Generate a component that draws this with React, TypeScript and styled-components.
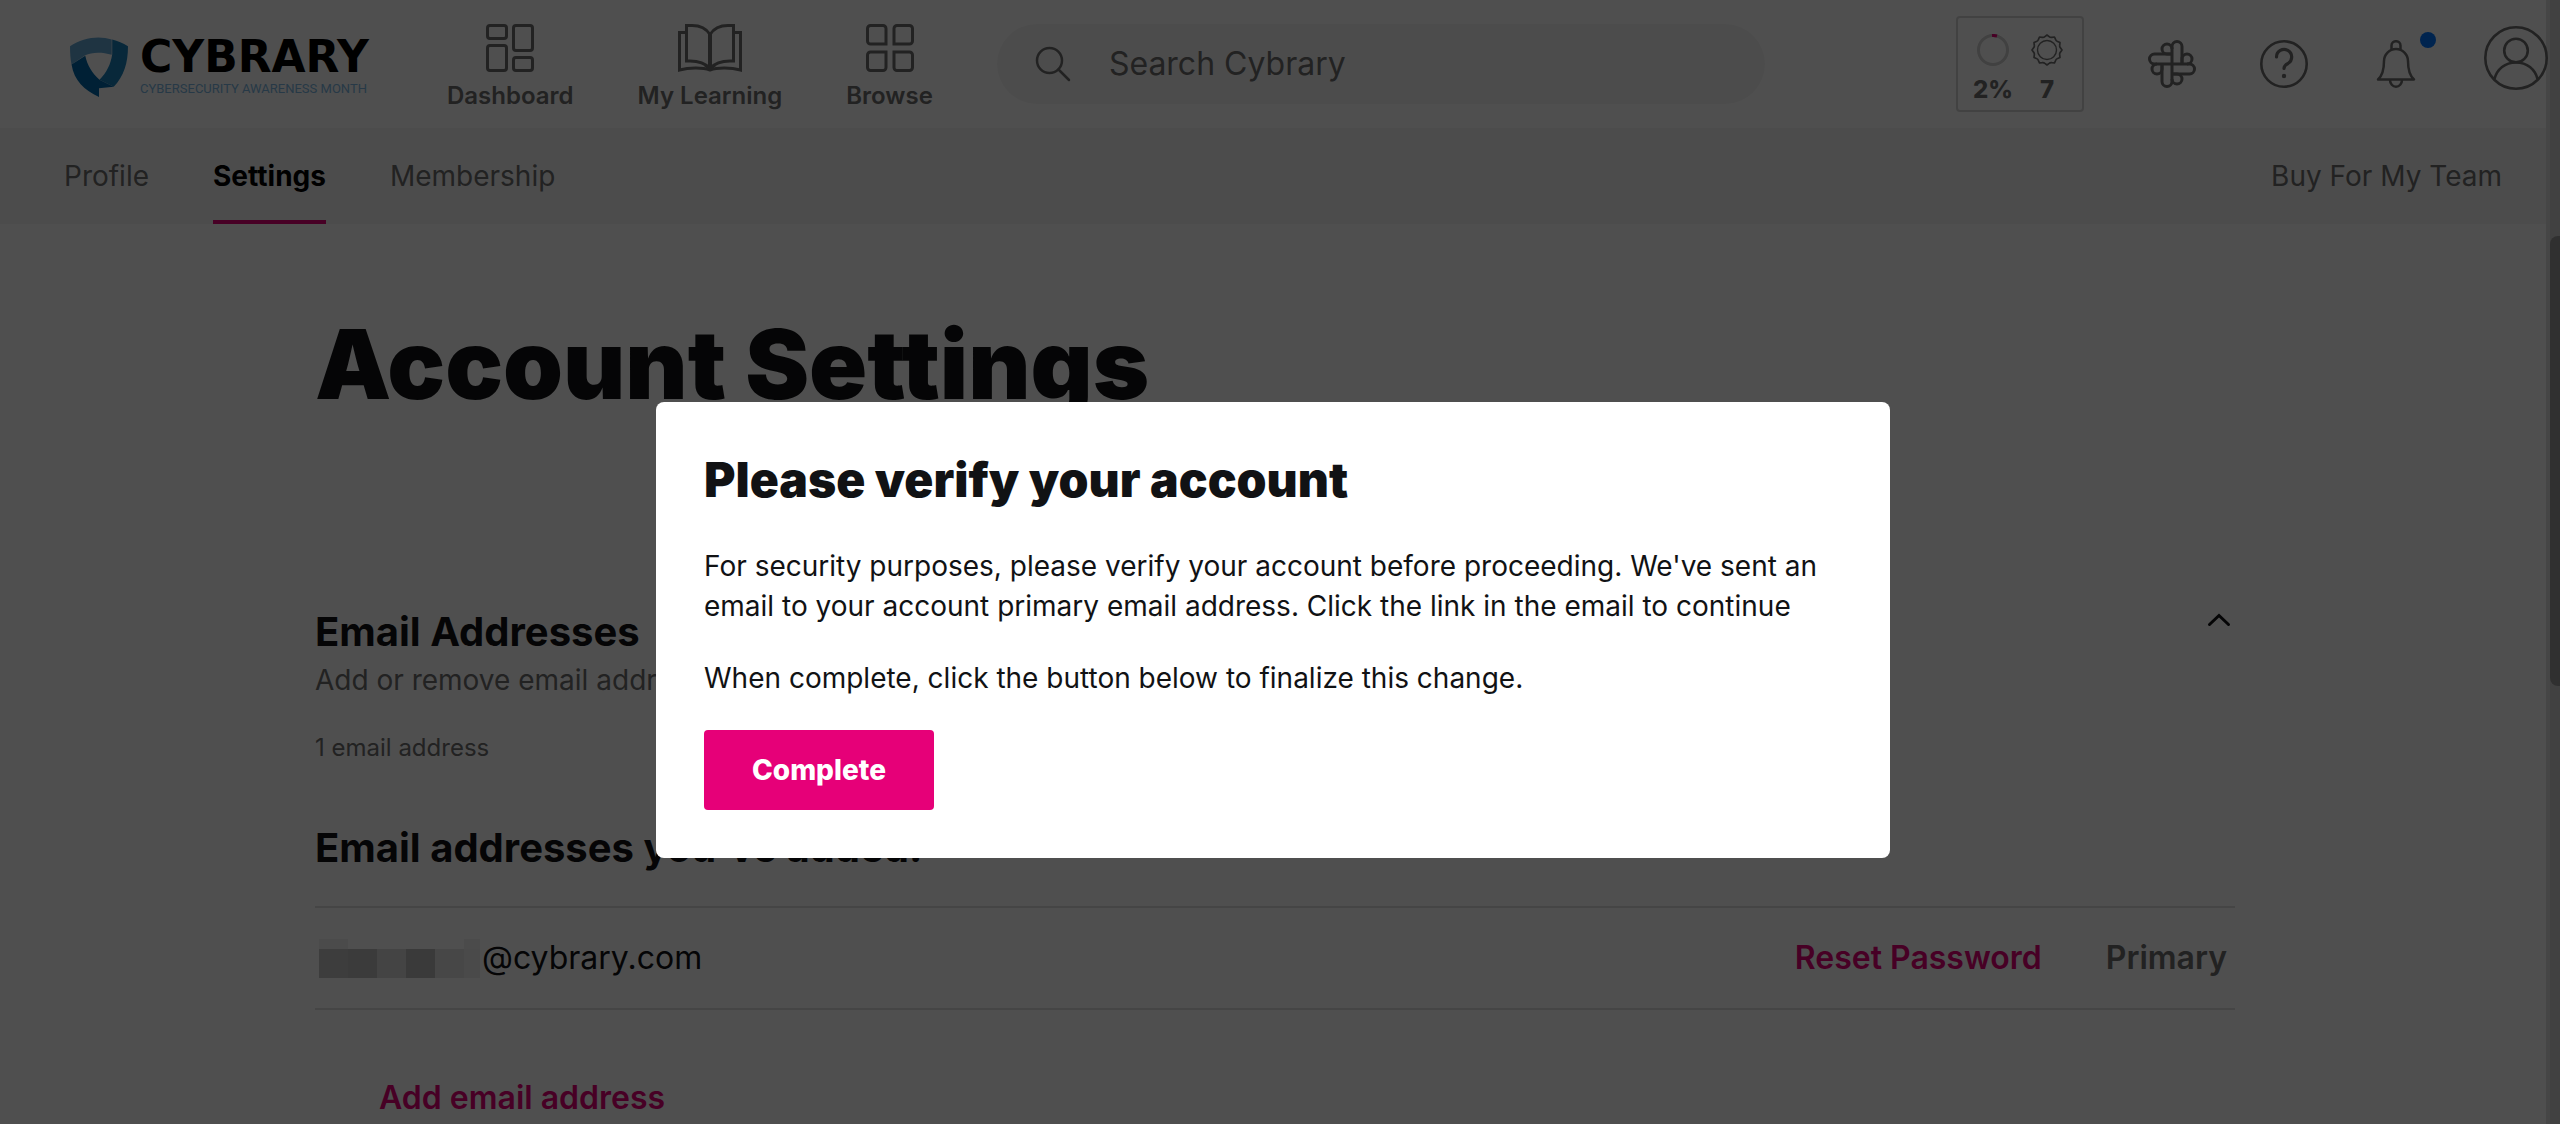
import React from "react";
import styled, { createGlobalStyle, css } from "styled-components";

const color = {
  ink: "#111214",
  black: "#000",
  grey: "#6e6e6e",
  line: "#dfdfdf",
  wash: "#f6f6f6",
  pink: "#e60078",
  blue: "#0074ff",
};

const GlobalStyle = createGlobalStyle`
  *, *::before, *::after { box-sizing: border-box; }
  body {
    margin: 0;
    overflow: hidden;
    background: #fff;
    color: ${color.ink};
    font-family: Inter, "Liberation Sans", sans-serif;
  }
  h1, h2, h3, p, ul { margin: 0; padding: 0; }
  ul { list-style: none; }
  a { color: inherit; text-decoration: none; }
  button { margin: 0; padding: 0; border: 0; background: none; font: inherit; color: inherit; cursor: pointer; }
  svg { display: block; }
`;

const Page = styled.div`
  position: relative;
  height: 100vh;
  overflow: hidden;
`;

/* ---------- header ---------- */

const Header = styled.header`
  position: relative;
  z-index: 2;
  display: flex;
  align-items: center;
  gap: 64px;
  height: 128px;
  padding: 0 12px 0 70px;
`;

const Logo = styled.a`
  display: flex;
  align-self: flex-start;
  flex: none;
  gap: 12px;
  width: 313px;
  padding-top: 37px;
`;

const LogoText = styled.span`
  display: flex;
  flex-direction: column;
  gap: 4px;
  white-space: nowrap;
`;

const Wordmark = styled.span`
  font-family: "DejaVu Sans", sans-serif;
  font-size: 44px;
  font-weight: 700;
  line-height: 40px;
  color: ${color.black};
`;

const Tagline = styled.span`
  font-family: Roboto, sans-serif;
  font-size: 13px;
  line-height: 16px;
  color: #7db8e4;
`;

const Nav = styled.nav`
  display: flex;
  align-self: flex-start;
  gap: 64px;
  padding-top: 24px;
`;

const NavItem = styled.a`
  display: flex;
  flex-direction: column;
  align-items: center;
  gap: 8px;
  font-size: 24px;
  font-weight: 600;
  line-height: 32px;
  white-space: nowrap;
  color: ${color.grey};
`;

const SearchBox = styled.label`
  display: flex;
  align-items: center;
  flex: 0 1 768px;
  gap: 38px;
  height: 80px;
  padding: 0 38px;
  border-radius: 40px;
  background: ${color.wash};
  color: ${color.grey};
`;

const SearchInput = styled.input`
  flex: 1;
  min-width: 0;
  padding: 0;
  border: 0;
  outline: 0;
  background: none;
  font: 400 32px/40px Inter, sans-serif;
  color: ${color.grey};
  &::placeholder { color: ${color.grey}; opacity: 1; }
`;

const Tools = styled.div`
  display: flex;
  align-items: center;
  gap: 64px;
  margin-left: auto;
  color: ${color.grey};
`;

const Stats = styled.button`
  display: flex;
  justify-content: center;
  width: 128px;
  height: 96px;
  padding-top: 16px;
  gap: 22px;
  border: 2px solid #d6d6d6;
  border-radius: 4px;
`;

const Stat = styled.span`
  display: flex;
  flex-direction: column;
  align-items: center;
  gap: 12px;
  width: 32px;
  font-size: 24px;
  font-weight: 800;
  line-height: 24px;
`;

const Tool = styled.button<{ $raised?: boolean }>`
  position: relative;
  ${(p) => p.$raised && css`padding-bottom: 12px;`}
`;

const Dot = styled.span`
  position: absolute;
  top: -8px;
  right: -16px;
  width: 16px;
  height: 16px;
  border-radius: 50%;
  background: ${color.blue};
`;

/* ---------- tabs ---------- */

const TabBar = styled.nav`
  display: flex;
  gap: 64px;
  height: 96px;
  padding: 0 58px 0 64px;
  background: ${color.wash};
  font-size: 28px;
  line-height: 96px;
`;

const Tab = styled.a<{ $active?: boolean; $end?: boolean }>`
  color: ${(p) => (p.$active ? color.black : color.grey)};
  font-weight: ${(p) => (p.$active ? 700 : 400)};
  box-shadow: inset 0 -4px ${(p) => (p.$active ? color.pink : "transparent")};
  margin-left: ${(p) => (p.$end ? "auto" : 0)};
`;

/* ---------- settings ---------- */

const Shell = styled.div`
  padding-right: 10px;
`;

const Main = styled.main`
  max-width: 1920px;
  margin: 0 auto;
  padding-top: 80px;
`;

const Title = styled.h1`
  font-size: 96px;
  font-weight: 900;
  line-height: 120px;
`;

const SectionHead = styled.div`
  display: flex;
  justify-content: space-between;
  align-items: flex-start;
  margin-top: 180px;
`;

const HeadText = styled.div`
  padding-top: 4px;
`;

const SectionTitle = styled.h2`
  font-size: 40px;
  font-weight: 700;
  line-height: 48px;
`;

const Lead = styled.p`
  margin-top: 4px;
  font-size: 28px;
  line-height: 40px;
  color: ${color.grey};
`;

const Count = styled.p`
  margin: 32px 0 60px;
  font-size: 24px;
  line-height: 32px;
  color: ${color.grey};
`;

const EmailList = styled.ul`
  margin-top: 34px;
  border-top: 2px solid ${color.line};
`;

const EmailRow = styled.li`
  display: flex;
  align-items: center;
  gap: 64px;
  height: 102px;
  padding: 0 8px 0 4px;
  border-bottom: 2px solid ${color.line};
  font-size: 32px;
  line-height: 40px;
`;

const Address = styled.span`
  display: flex;
  align-items: center;
  gap: 2px;
  margin-right: auto;
`;

const Redacted = styled.span`
  display: grid;
  grid-template-columns: repeat(5, 29px) 16px;
  grid-template-rows: 10px 29px;
`;

const Block = styled.span<{ $shade: string }>`
  background: ${(p) => p.$shade};
`;

const Action = styled.button<{ $indent?: boolean }>`
  font-size: 32px;
  font-weight: 600;
  line-height: 40px;
  color: ${color.pink};
  ${(p) => p.$indent && css`margin: 68px 0 0 64px;`}
`;

const Primary = styled.span`
  font-weight: 600;
  color: ${color.grey};
`;

/* ---------- scrollbar ---------- */

const Scrollbar = styled.div`
  position: absolute;
  z-index: 1;
  top: 0;
  right: 0;
  bottom: 0;
  width: 14px;
  padding: 236px 0 0 4px;
  background: linear-gradient(to right, #e2e2e2 4px, #d2d2d2 4px);
`;

const Thumb = styled.div`
  height: 450px;
  border-radius: 8px 0 0 8px;
  background: #9b9b9b;
`;

/* ---------- dialog ---------- */

const Overlay = styled.div`
  position: fixed;
  z-index: 3;
  inset: 0;
  display: flex;
  justify-content: center;
  align-items: flex-start;
  padding: 402px 14px 0 0;
  background: rgba(0, 0, 0, 0.69);
`;

const Dialog = styled.section`
  width: 100%;
  max-width: 1234px;
  padding: 48px;
  border-radius: 8px;
  background: #fff;
`;

const DialogTitle = styled.h2`
  margin-bottom: 36px;
  font-size: 48px;
  font-weight: 900;
  line-height: 60px;
`;

const DialogText = styled.p`
  margin-bottom: 32px;
  font-size: 28px;
  line-height: 40px;
`;

const PrimaryButton = styled.button`
  height: 80px;
  padding: 0 48px;
  border-radius: 4px;
  background: ${color.pink};
  color: #fff;
  font-size: 28px;
  font-weight: 800;
`;

/* ---------- drawings ---------- */

const ShieldIcon = () => (
  <svg width="58" height="60" viewBox="0 0 57 59" aria-hidden="true">
    <path fill="#66a9d6" d="M0 9C12 1 28-2 41 2.500V17.500C31 14.500 21 15 15 18L1.500 27C.3 21 0 16 0 9Z" />
    <path fill="#1a81bc" d="M41.500 2.500C47 4 52 6 57 9C57 26 53 38 43 49L29 42C36 35 40 27 41.500 17Z" />
    <path fill="#0069ab" d="M1.500 27L15 18.500C17 28 22 36 29 42L43 49L28.500 50.500V59C14 52 4 43 1.500 27Z" />
  </svg>
);

const DashboardIcon = () => (
  <svg width="48" height="48" viewBox="0 0 48 48" fill="none" stroke="currentColor" strokeWidth="3" aria-hidden="true">
    <rect x="1.500" y="1.500" width="19" height="13" rx="2.500" />
    <rect x="1.500" y="21.500" width="19" height="25" rx="2.500" />
    <rect x="27.500" y="1.500" width="19" height="25" rx="2.500" />
    <rect x="27.500" y="33.500" width="19" height="13" rx="2.500" />
  </svg>
);

const BookIcon = () => (
  <svg width="64" height="48" viewBox="0 0 64 48" fill="none" stroke="currentColor" strokeWidth="3" aria-hidden="true">
    <path d="M32 10.500C28 4 21 1.500 14 1.500H8.500V37H12C21 37 27 39 32 44.500" />
    <path d="M32 10.500C36 4 43 1.500 50 1.500H55.500V37H52C43 37 37 39 32 44.500" />
    <path d="M32 10V45" strokeWidth="4" />
    <path d="M8 8.500H1.500V46C11 43.500 24 43 32 46C40 43 53 43.500 62.500 46V8.500H56" />
    <path d="M26 42L32 47L38 42Z" fill="currentColor" stroke="none" />
  </svg>
);

const BrowseIcon = () => (
  <svg width="48" height="48" viewBox="0 0 48 48" fill="none" stroke="currentColor" strokeWidth="3" aria-hidden="true">
    {[0, 90, 180, 270].map((a) => (
      <path key={a} transform={`rotate(${a} 24 24)`} d="M20 20H4.500a3 3 0 0 1-3-3V4.500a3 3 0 0 1 3-3H17a3 3 0 0 1 3 3Z" />
    ))}
  </svg>
);

const SearchIcon = () => (
  <svg width="36" height="36" viewBox="0 0 36 36" fill="none" stroke="currentColor" strokeWidth="2.500" strokeLinecap="round" aria-hidden="true">
    <circle cx="14.500" cy="14.500" r="12.500" />
    <path d="M23.500 23.500L34 34" />
  </svg>
);

const RingIcon = () => (
  <svg width="32" height="32" viewBox="0 0 32 32" fill="none" strokeWidth="3" aria-hidden="true">
    <circle cx="16" cy="16" r="14.500" stroke="#d0d0d0" />
    <path d="M15 1.500A14.500 14.500 0 0 1 20 2" stroke={color.pink} />
  </svg>
);

const scallop = Array.from({ length: 12 }, (_, i) => {
  const at = (r: number, turn: number) => {
    const t = (turn * Math.PI) / 6;
    return `${(16 + r * Math.sin(t)).toFixed(2)} ${(16 - r * Math.cos(t)).toFixed(2)}`;
  };
  return `${i === 0 ? `M${at(15, 0)}` : ""}L${at(13.6, i + 0.3)}Q${at(12.8, i + 0.5)} ${at(13.6, i + 0.7)}L${at(15, i + 1)}`;
}).join("");

const BadgeIcon = () => (
  <svg width="32" height="32" viewBox="0 0 32 32" fill="none" stroke="currentColor" aria-hidden="true">
    <path d={`${scallop}Z`} strokeWidth="1.700" strokeLinejoin="round" />
    <circle cx="16" cy="16" r="9.500" strokeWidth="1.400" />
  </svg>
);

const SlackIcon = () => (
  <svg width="48" height="48" viewBox="0 0 48 48" fill="none" stroke="currentColor" strokeWidth="3" aria-hidden="true">
    {[0, 90, 180, 270].map((a) => (
      <g key={a} transform={`rotate(${a} 24 24)`}>
        <path d="M24 24V6.500a5 5 0 0 1 10 0V24" />
        <path d="M24 14H19a5 5 0 1 1 5-5" />
      </g>
    ))}
  </svg>
);

const HelpIcon = () => (
  <svg width="48" height="48" viewBox="0 0 48 48" fill="none" stroke="currentColor" strokeWidth="2.600" aria-hidden="true">
    <circle cx="24" cy="24" r="22.700" />
    <path d="M16.500 17a7.600 7.600 0 1 1 11.500 6.500c-3 1.600-4 2.600-4 5" strokeWidth="3.200" strokeLinecap="round" />
    <circle cx="24" cy="36" r="2.200" fill="currentColor" stroke="none" />
  </svg>
);

const BellIcon = () => (
  <svg width="48" height="48" viewBox="-4 0 48 48" fill="none" stroke="currentColor" strokeWidth="2.500" strokeLinejoin="round" aria-hidden="true">
    <path d="M15.500 9.500V5.500a4.500 4.300 0 0 1 9 0V9.500" />
    <path d="M2 39.500C7 35 8 29 8 21a12 12 0 0 1 24 0C32 29 33 35 38 39.500Z" />
    <path d="M14 40a6 6.700 0 0 0 12 0" />
  </svg>
);

const AvatarIcon = () => (
  <svg width="64" height="64" viewBox="0 0 64 64" fill="none" stroke="currentColor" strokeWidth="2.600" aria-hidden="true">
    <circle cx="32" cy="32" r="30.700" />
    <circle cx="32" cy="24.500" r="11.800" />
    <path d="M10.500 53C13 43 21 36.500 32 36.500S51 43 53.500 53" />
  </svg>
);

const ChevronIcon = () => (
  <svg width="32" height="32" viewBox="0 0 32 32" fill="none" stroke="currentColor" strokeWidth="3" strokeLinecap="round" aria-hidden="true">
    <path d="M6.500 20.500L16 11.500L25.500 20.500" />
  </svg>
);

const navItems = [
  { label: "Dashboard", Icon: DashboardIcon },
  { label: "My Learning", Icon: BookIcon },
  { label: "Browse", Icon: BrowseIcon },
];

const shades = [
  "#f2f2f2", "transparent", "transparent", "transparent", "transparent", "#f2f2f2",
  "#c4c4c4", "#bebebe", "#dadada", "#bababa", "#e4e4e4", "#ededed",
];

export default function App() {
  return (
    <>
      <GlobalStyle />
      <Page>
        <Scrollbar aria-hidden="true">
          <Thumb />
        </Scrollbar>
        <Header>
          <Logo href="#">
            <ShieldIcon />
            <LogoText>
              <Wordmark>CYBRARY</Wordmark>
              <Tagline>CYBERSECURITY AWARENESS MONTH</Tagline>
            </LogoText>
          </Logo>
          <Nav>
            {navItems.map(({ label, Icon }) => (
              <NavItem href="#" key={label}>
                <Icon />
                {label}
              </NavItem>
            ))}
          </Nav>
          <SearchBox>
            <SearchIcon />
            <SearchInput type="text" placeholder="Search Cybrary" aria-label="Search Cybrary" />
          </SearchBox>
          <Tools>
            <Stats type="button">
              <Stat><RingIcon />2%</Stat>
              <Stat><BadgeIcon />7</Stat>
            </Stats>
            <Tool type="button" aria-label="Slack"><SlackIcon /></Tool>
            <Tool type="button" aria-label="Help"><HelpIcon /></Tool>
            <Tool type="button" aria-label="Notifications"><BellIcon /><Dot /></Tool>
            <Tool type="button" aria-label="Account" $raised><AvatarIcon /></Tool>
          </Tools>
        </Header>
        <TabBar>
          <Tab href="#">Profile</Tab>
          <Tab href="#" $active>Settings</Tab>
          <Tab href="#">Membership</Tab>
          <Tab href="#" $end>Buy For My Team</Tab>
        </TabBar>
        <Shell>
          <Main>
            <Title>Account Settings</Title>
            <SectionHead>
              <HeadText>
                <SectionTitle>Email Addresses</SectionTitle>
                <Lead>Add or remove email addresses</Lead>
              </HeadText>
              <button type="button" aria-label="Collapse"><ChevronIcon /></button>
            </SectionHead>
            <Count>1 email address</Count>
            <SectionTitle as="h3">Email addresses you've added:</SectionTitle>
            <EmailList>
              <EmailRow>
                <Address>
                  <Redacted aria-hidden="true">
                    {shades.map((s, i) => <Block key={i} $shade={s} />)}
                  </Redacted>
                  @cybrary.com
                </Address>
                <Action type="button">Reset Password</Action>
                <Primary>Primary</Primary>
              </EmailRow>
            </EmailList>
            <Action type="button" $indent>Add email address</Action>
          </Main>
        </Shell>
        <Overlay>
          <Dialog role="dialog" aria-modal="true" aria-labelledby="verify-title">
            <DialogTitle id="verify-title">Please verify your account</DialogTitle>
            <DialogText>
              For security purposes, please verify your account before proceeding. We've sent an
              email to your account primary email address. Click the link in the email to continue
            </DialogText>
            <DialogText>When complete, click the button below to finalize this change.</DialogText>
            <PrimaryButton type="button">Complete</PrimaryButton>
          </Dialog>
        </Overlay>
      </Page>
    </>
  );
}
